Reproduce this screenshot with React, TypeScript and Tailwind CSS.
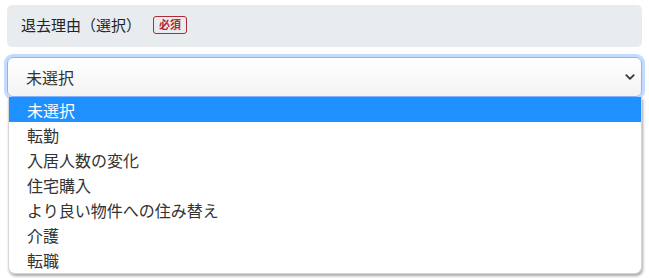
const reasons = [
  "未選択",
  "転勤",
  "入居人数の変化",
  "住宅購入",
  "より良い物件への住み替え",
  "介護",
  "転職",
];

const ChevronDown = () => (
  <svg width="12" height="12" viewBox="0 0 16 16" fill="none">
    <path
      d="M3 5.5l5 5 5-5"
      stroke="#343a40"
      strokeWidth="2.4"
      strokeLinecap="round"
      strokeLinejoin="round"
    />
  </svg>
);

export default function App() {
  return (
    <div className="w-[649px] h-[278px] bg-white px-[7px] pt-[5px] font-['Noto_Sans_CJK_JP','Noto_Sans',sans-serif] text-[#212529] overflow-hidden">
      <div className="h-[42px] bg-[#e9ecef] rounded-[5px] flex items-center pl-[14px] gap-[12px] pb-[3px]">
        <span className="text-[15px] leading-none">退去理由（選択）</span>
        <span className="h-[18px] px-[5px] flex items-center border border-[#b02a37] rounded-[3px] text-[11px] font-bold text-[#b02a37] leading-none">
          必須
        </span>
      </div>

      <div className="relative mt-[10px]">
        <div className="h-[40px] border border-[#86b7fe] rounded-[6px] shadow-[0_0_0_3px_rgba(13,110,253,0.25)] bg-gradient-to-b from-white to-[#f3f3f3] flex items-center justify-between pl-[18px] pr-[5px]">
          <span className="text-[16px] leading-none text-[#333]">未選択</span>
          <ChevronDown />
        </div>

        <ul className="absolute top-[40px] left-[1px] right-0 bg-white rounded-b-[7px] shadow-[1px_2px_3px_rgba(0,0,0,0.35)] border border-t-0 border-[#d6d6d6] pb-[1px]">
          {reasons.map((r, i) => (
            <li
              key={r}
              className={
                i === 0
                  ? "h-[25px] flex items-center pl-[18px] text-[16px] leading-none bg-[#1e90ff] text-white"
                  : "h-[25px] flex items-center pl-[18px] text-[16px] leading-none text-[#333]"
              }
            >
              {r}
            </li>
          ))}
        </ul>
      </div>
    </div>
  );
}
